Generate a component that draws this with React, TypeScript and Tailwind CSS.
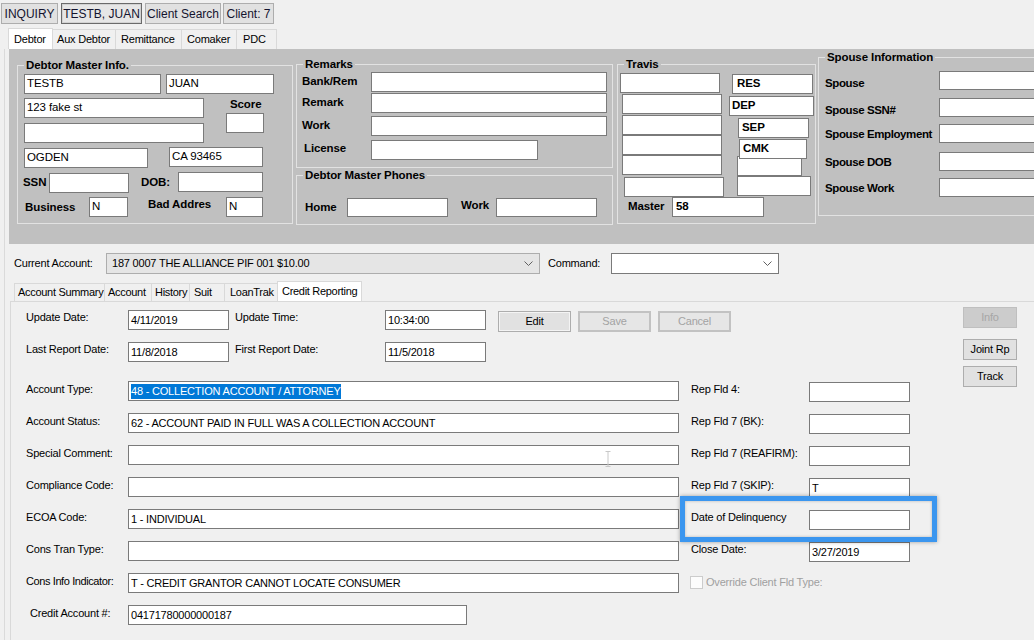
import type { ReactNode } from 'react';

function Field({ className = '', h = 'h-[20px]', children }: { className?: string; h?: string; children?: ReactNode }) {
  return (
    <div className={`flex shrink-0 items-center overflow-hidden whitespace-nowrap border border-[#7a7a7a] bg-white px-[2px] ${h} ${className}`}>
      {children}
    </div>
  );
}

function Group({ title, className = '', children }: { title: string; className?: string; children?: ReactNode }) {
  return (
    <div className={`shrink-0 border border-[#e2e2e2] ${className}`}>
      <div className="-mt-[8px] ml-[6px] w-fit bg-[#c0c0c0] px-[2px] font-bold leading-[14px]">{title}</div>
      {children}
    </div>
  );
}

function Chevron() {
  return (
    <svg width="9" height="5" viewBox="0 0 9 5" className="shrink-0">
      <polyline points="0.5,0.5 4.5,4.5 8.5,0.5" fill="none" stroke="#606060" strokeWidth="1" />
    </svg>
  );
}

const spouseRows = [
  { label: 'Spouse', mt: 'mt-[7px]', lt: 'pt-[5px]' },
  { label: 'Spouse SSN#', mt: 'mt-[7px]', lt: 'pt-[5px]' },
  { label: 'Spouse Employment', mt: 'mt-[6px]', lt: 'pt-[3px]' },
  { label: 'Spouse DOB', mt: 'mt-[8px]', lt: 'pt-[3px]' },
  { label: 'Spouse Work', mt: 'mt-[6px]', lt: 'pt-[3px]' },
];

const creditRows: { label: string; value: ReactNode; right: string; rightValue: string }[] = [
  {
    label: 'Account Type:',
    value: <span className="bg-[#0078d7] leading-[15px] text-white">48 - COLLECTION ACCOUNT / ATTORNEY</span>,
    right: 'Rep Fld 4:',
    rightValue: '',
  },
  { label: 'Account Status:', value: '62 - ACCOUNT PAID IN FULL WAS A COLLECTION ACCOUNT', right: 'Rep Fld 7 (BK):', rightValue: '' },
  { label: 'Special Comment:', value: '', right: 'Rep Fld 7 (REAFIRM):', rightValue: '' },
  { label: 'Compliance Code:', value: '', right: 'Rep Fld 7 (SKIP):', rightValue: 'T' },
  { label: 'ECOA Code:', value: '1 - INDIVIDUAL', right: 'Date of Delinquency', rightValue: '' },
  { label: 'Cons Tran Type:', value: '', right: 'Close Date:', rightValue: '3/27/2019' },
];

export default function App() {
  return (
    <div className="relative h-[640px] w-[1034px] overflow-hidden bg-[#f0f0f0] font-['Liberation_Sans',Arial,sans-serif] text-black">
      {/* Top buttons */}
      <div className="flex h-[26px] items-start gap-[3px] pl-[1px] pt-[3px] text-[12px] text-[#14142e]">
        <button className="h-[21px] w-[57px] border border-[#adadad] bg-[#e1e1e1]">INQUIRY</button>
        <button className="h-[21px] w-[81px] border border-[#6a6a6a] bg-[#e6e6e6] shadow-[inset_0_0_0_1px_#d2d2d2]">TESTB, JUAN</button>
        <button className="h-[21px] w-[76px] border border-[#adadad] bg-[#e1e1e1]">Client Search</button>
        <button className="-ml-[1px] h-[21px] w-[51px] border border-[#adadad] bg-[#e1e1e1]">Client: 7</button>
      </div>

      {/* Debtor tabs */}
      <div className="flex h-[23px] items-end whitespace-nowrap pl-[8px] text-[11px] leading-[19px] tracking-[-0.2px]">
        <div className="h-[21px] w-[45px] border border-b-0 border-[#d9d9d9] bg-white pl-[5px] pt-[1px]">Debtor</div>
        <div className="-ml-px h-[20px] w-[64px] border border-b-0 border-[#d9d9d9] pl-[4px]">Aux Debtor</div>
        <div className="-ml-px h-[20px] w-[67px] border border-b-0 border-[#d9d9d9] pl-[5px]">Remittance</div>
        <div className="-ml-px h-[20px] w-[56px] border border-b-0 border-[#d9d9d9] pl-[5px]">Comaker</div>
        <div className="-ml-px h-[20px] w-[41px] border border-b-0 border-[#d9d9d9] pl-[6px]">PDC</div>
      </div>

      <div className="ml-[4px] h-[591px] border-l border-[#dadada]">
        {/* Gray debtor panel */}
        <div className="ml-[4px] flex h-[195px] items-start bg-[#c0c0c0] text-[11.5px] tracking-[-0.1px]">
          <Group title="Debtor Master Info." className="ml-[8px] mt-[16px] h-[159px] w-[276px]">
            <div className="mt-[2px] flex gap-[5px] pl-[6px]">
              <Field className="w-[137px]">TESTB</Field>
              <Field className="w-[108px]">JUAN</Field>
            </div>
            <div className="mt-[4px] flex items-start pl-[6px]">
              <div className="flex flex-col">
                <Field className="w-[180px]">123 fake st</Field>
                <Field className="mt-[5px] w-[180px]" />
              </div>
              <div className="ml-[22px] flex flex-col">
                <div className="-mt-[1px] pl-[4px] font-bold leading-[14px]">Score</div>
                <Field className="mt-[2px] w-[38px]" />
              </div>
            </div>
            <div className="mt-[5px] flex items-start pl-[6px]">
              <Field className="w-[124px]">OGDEN</Field>
              <Field className="-mt-[1px] ml-[21px] w-[94px]">CA 93465</Field>
            </div>
            <div className="mt-[4px] flex items-start pl-[5px]">
              <span className="w-[26px] font-bold leading-[20px]">SSN</span>
              <Field className="mt-[1px] w-[80px]" />
              <span className="ml-[12px] w-[37px] font-bold leading-[20px]">DOB:</span>
              <Field className="w-[85px]" />
            </div>
            <div className="mt-[4px] flex items-start pl-[7px]">
              <span className="w-[64px] font-bold leading-[20px]">Business</span>
              <Field className="w-[39px]">N</Field>
              <span className="-mt-[3px] ml-[20px] w-[78px] font-bold leading-[20px]">Bad Addres</span>
              <Field className="w-[37px]">N</Field>
            </div>
          </Group>

          <div className="ml-[3px] mt-[15px] flex flex-col">
            <Group title="Remarks" className="h-[104px] w-[317px]">
              <div className="mt-[1px] flex items-center pl-[5px]">
                <span className="w-[69px] font-bold">Bank/Rem</span>
                <Field className="w-[236px]" />
              </div>
              <div className="mt-[1px] flex items-center pl-[5px]">
                <span className="w-[69px] font-bold">Remark</span>
                <Field className="w-[236px]" />
              </div>
              <div className="mt-[3px] flex items-center pl-[5px]">
                <span className="w-[69px] font-bold">Work</span>
                <Field className="w-[236px]" />
              </div>
              <div className="mt-[4px] flex items-center pl-[7px]">
                <span className="-mt-[2px] w-[67px] font-bold">License</span>
                <Field className="w-[167px]" />
              </div>
            </Group>
            <Group title="Debtor Master Phones" className="mt-[7px] h-[50px] w-[317px]">
              <div className="mt-[16px] flex items-start pl-[8px]">
                <span className="w-[42px] font-bold leading-[19px]">Home</span>
                <Field h="h-[19px]" className="w-[101px]" />
                <span className="-mt-[2px] ml-[13px] w-[35px] font-bold leading-[19px]">Work</span>
                <Field h="h-[19px]" className="w-[101px]" />
              </div>
            </Group>
          </div>

          <Group title="Travis" className="ml-[4px] mt-[15px] h-[160px] w-[199px]">
            <div className="flex items-start">
              <div className="flex w-[106px] flex-col items-start">
                <Field className="ml-[2px] mt-[2px] w-[100px]" />
                <Field className="ml-[4px] mt-[1px] w-[100px]" />
                <Field className="ml-[4px] mt-[1px] w-[100px]" />
                <Field className="ml-[4px] w-[100px]" />
                <Field className="ml-[4px] w-[100px]" />
                <Field className="ml-[6px] mt-[2px] w-[100px]" />
              </div>
              <div className="ml-[5px] flex flex-col items-start font-bold">
                <Field className="ml-[3px] mt-[3px] w-[81px] pl-[4px]">RES</Field>
                <Field className="mt-[2px] w-[85px]">DEP</Field>
                <Field className="ml-[9px] mt-[2px] w-[71px] pl-[3px]">SEP</Field>
                <Field className="relative z-10 ml-[10px] mt-[1px] w-[68px] pl-[3px]">CMK</Field>
                <Field className="-mt-[3px] ml-[8px] w-[65px]" />
                <Field className="ml-[8px] w-[74px]" />
              </div>
            </div>
            <div className="flex items-center">
              <span className="ml-[10px] w-[44px] font-bold">Master</span>
              <Field className="w-[92px] pl-[3px] font-bold">58</Field>
            </div>
          </Group>

          <Group title="Spouse Information" className="ml-[2px] mt-[8px] h-[159px] w-[240px]">
            {spouseRows.map((r) => (
              <div key={r.label} className={`flex h-[20px] items-start pl-[6px] ${r.mt}`}>
                <span className={`w-[114px] whitespace-nowrap font-bold leading-[14px] tracking-[-0.4px] ${r.lt}`}>{r.label}</span>
                <Field h="h-[19px]" className="w-[110px]" />
              </div>
            ))}
          </Group>
        </div>

        {/* Current account / command */}
        <div className="mt-[9px] flex items-center pl-[9px] text-[11px] tracking-[-0.2px]">
          <span className="w-[92px]">Current Account:</span>
          <div className="flex h-[21px] w-[434px] items-center justify-between border border-[#adadad] bg-[#e5e5e5] pl-[5px] pr-[6px]">
            <span>187 0007 THE ALLIANCE PIF 001 $10.00</span>
            <Chevron />
          </div>
          <span className="ml-[8px] w-[63px]">Command:</span>
          <div className="flex h-[21px] w-[168px] items-center justify-end border border-[#7a7a7a] bg-white pr-[6px]">
            <Chevron />
          </div>
        </div>

        {/* Account sub tabs */}
        <div className="mt-[7px] flex h-[20px] items-end whitespace-nowrap pl-[9px] text-[11px] leading-[17px] tracking-[-0.3px]">
          <div className="h-[18px] w-[91px] border border-b-0 border-[#d9d9d9] pl-[3px]">Account Summary</div>
          <div className="-ml-px h-[18px] w-[48px] border border-b-0 border-[#d9d9d9] pl-[3px]">Account</div>
          <div className="-ml-px h-[18px] w-[39px] border border-b-0 border-[#d9d9d9] pl-[3px]">History</div>
          <div className="-ml-px h-[18px] w-[36px] border border-b-0 border-[#d9d9d9] pl-[4px]">Suit</div>
          <div className="-ml-px h-[18px] w-[54px] border border-b-0 border-[#d9d9d9] pl-[5px]">LoanTrak</div>
          <div className="-ml-px h-[20px] w-[85px] border border-b-0 border-[#d9d9d9] bg-white pl-[4px] pt-[1px]">Credit Reporting</div>
        </div>

        {/* Credit reporting page */}
        <div className="ml-[5px] flex h-[340px] w-[1030px] items-start border border-[#d9d9d9] text-[11px] tracking-[-0.2px]">
          <div className="flex w-[940px] flex-col">
            <div className="mt-[8px] flex h-[22px] items-start">
              <span className="ml-[15px] w-[102px] leading-[14px]">Update Date:</span>
              <Field className="w-[101px]">4/11/2019</Field>
              <span className="ml-[6px] w-[150px] leading-[14px]">Update Time:</span>
              <Field className="w-[101px]">10:34:00</Field>
              <button className="ml-[12px] mt-[1px] h-[21px] w-[73px] border border-[#adadad] bg-[#e1e1e1] shadow-[inset_0_0_0_1px_#f4f4f4]">Edit</button>
              <button className="ml-[7px] mt-[1px] h-[21px] w-[73px] border-2 border-[#c2c2c2] bg-[#e6e6e6] text-[#a3a3a3]">Save</button>
              <button className="ml-[7px] mt-[1px] h-[21px] w-[73px] border-2 border-[#c2c2c2] bg-[#e6e6e6] text-[#a3a3a3]">Cancel</button>
            </div>
            <div className="mt-[10px] flex h-[20px] items-start">
              <span className="ml-[15px] w-[102px] leading-[14px]">Last Report Date:</span>
              <Field className="w-[101px]">11/8/2018</Field>
              <span className="ml-[6px] w-[150px] leading-[14px]">First Report Date:</span>
              <Field className="w-[101px]">11/5/2018</Field>
            </div>

            {creditRows.map((r, i) => (
              <div key={r.label} className={`flex h-[20px] items-start ${i === 0 ? 'mt-[19px]' : 'mt-[12px]'}`}>
                <span className="ml-[15px] w-[102px] leading-[16px]">{r.label}</span>
                <Field className="w-[551px]">{r.value}</Field>
                <span className="ml-[12px] w-[118px] whitespace-nowrap leading-[16px]">{r.right}</span>
                <Field className="mt-[1px] w-[101px]">{r.rightValue}</Field>
              </div>
            ))}

            <div className="mt-[12px] flex h-[20px] items-start">
              <span className="ml-[15px] w-[102px] whitespace-nowrap leading-[16px] tracking-[-0.4px]">Cons Info Indicator:</span>
              <Field className="w-[551px]">T - CREDIT GRANTOR CANNOT LOCATE CONSUMER</Field>
              <div className="ml-[11px] mt-[3px] h-[13px] w-[13px] border border-[#cccccc] bg-[#fcfcfc]" />
              <span className="ml-[3px] mt-[1px] leading-[16px] text-[#a0a0a0]">Override Client Fld Type:</span>
            </div>
            <div className="mt-[12px] flex h-[20px] items-start">
              <span className="ml-[19px] w-[98px] leading-[16px]">Credit Account #:</span>
              <Field className="w-[339px]">04171780000000187</Field>
            </div>
          </div>

          <div className="ml-[12px] flex flex-col">
            <button className="mt-[5px] h-[21px] w-[54px] border border-[#bfbfbf] bg-[#cccccc] text-[#a6a6a6]">Info</button>
            <button className="mt-[11px] h-[21px] w-[54px] border border-[#adadad] bg-[#e1e1e1]">Joint Rp</button>
            <button className="mt-[6px] h-[21px] w-[54px] border border-[#adadad] bg-[#e1e1e1]">Track</button>
          </div>
        </div>
      </div>

      {/* I-beam cursor over Special Comment */}
      <svg className="absolute left-[605px] top-[451px]" width="6" height="16" viewBox="0 0 6 16">
        <path d="M0.5 0.5h5M3 0.5v15M0.5 15.5h5" fill="none" stroke="#c8c8c8" strokeWidth="1" />
      </svg>

      {/* Highlight around Date of Delinquency */}
      <div className="absolute left-[680px] top-[496px] h-[46px] w-[257px] border-[5px] border-[#3b96ef] shadow-[0_0_4px_rgba(0,0,0,0.35),inset_0_0_3px_rgba(0,0,0,0.25)]" />
    </div>
  );
}
